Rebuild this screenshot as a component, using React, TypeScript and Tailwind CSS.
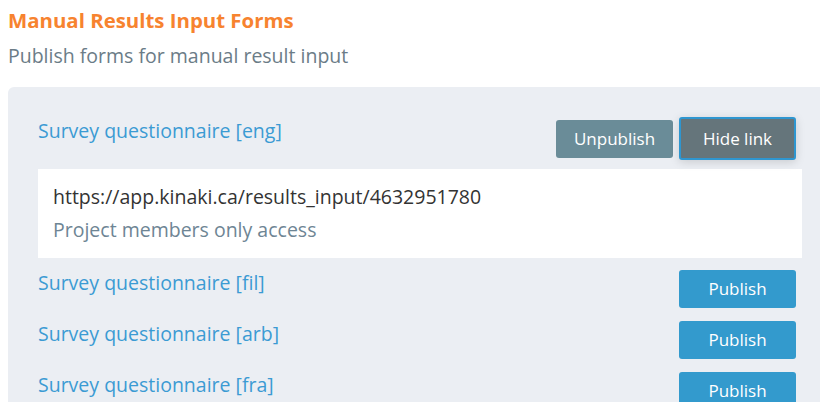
export default function App() {
  const rows = ["fil", "arb", "fra"];
  return (
    <div className="w-[820px] h-[402px] overflow-hidden bg-white font-['Open_Sans',sans-serif]">
      <div className="pl-2 pt-[7px]">
        <h1 className="text-[20.4px] leading-[26px] font-bold text-[#f7832f]">Manual Results Input Forms</h1>
        <p className="mt-[10px] text-[19.5px] leading-[26px] text-[#6b7c87]">Publish forms for manual result input</p>
      </div>
      <div className="ml-2 mt-[18px] rounded-tl-[6px] bg-[#ebeef3] pl-[30px] pr-[18px] pt-[30px] pb-6">
        <div className="flex items-start justify-between">
          <a className="mt-[1px] text-[19.5px] leading-[26px] text-[#3b9bd3]">Survey questionnaire [eng]</a>
          <div className="mr-[6px] flex items-center gap-[6px]">
            <button className="h-[38px] w-[117px] rounded-[3px] bg-[#6a8c98] text-[17px] text-white">Unpublish</button>
            <button className="h-[43px] w-[117px] rounded-[3px] border-2 border-[#2e96d0] bg-[#65757b] text-[17px] text-white shadow-[0_2px_10px_rgba(0,0,0,0.15)]">
              Hide link
            </button>
          </div>
        </div>
        <div className="mt-[9px] bg-white px-[15px] pt-[13px] pb-[13px]">
          <div className="text-[19.5px] leading-[30px] text-[#333]">https://app.kinaki.ca/results_input/4632951780</div>
          <div className="mt-[3px] text-[19.5px] leading-[30px] text-[#6e8594]">Project members only access</div>
        </div>
        <div className="mt-[12px] flex flex-col gap-[13px]">
          {rows.map((r) => (
            <div key={r} className="flex items-start justify-between">
              <a className="text-[19.5px] leading-[26px] text-[#3b9bd3]">Survey questionnaire [{r}]</a>
              <button className="mr-[6px] h-[38px] w-[117px] rounded-[3px] bg-[#339acd] text-[17px] text-white">Publish</button>
            </div>
          ))}
        </div>
      </div>
    </div>
  );
}
